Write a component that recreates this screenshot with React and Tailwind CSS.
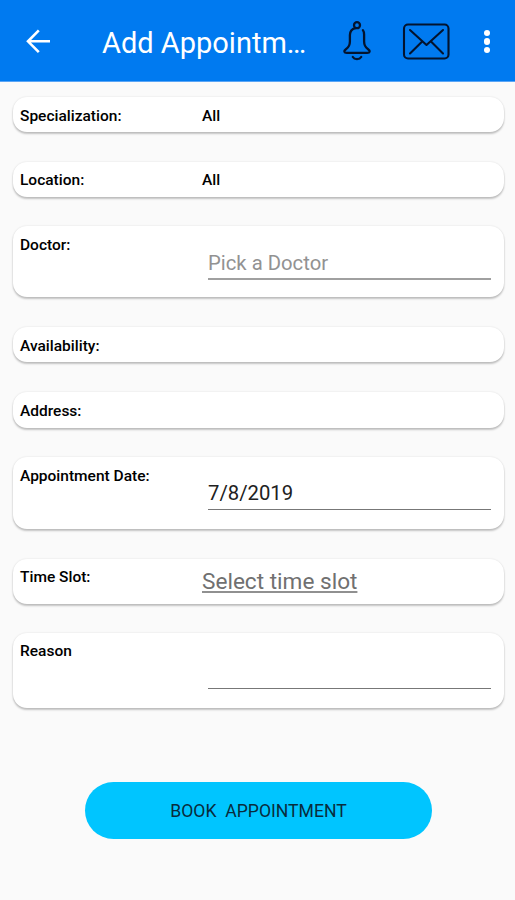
import React from 'react'

const fields = [
    { label: 'Specialization:', type: 'text', value: 'All', box: 'h-[35px]', pad: 'pt-[8.5px]' },
    { label: 'Location:', type: 'text', value: 'All', box: 'h-[35px] mt-[30px]', pad: 'pt-2' },
    { label: 'Doctor:', type: 'input', placeholder: 'Pick a Doctor', box: 'h-[71px] mt-[29px]', pad: 'pt-[9px]', line: 'h-[54px] pt-[23px] border-b-2 border-[#a0a0a0]' },
    { label: 'Availability:', type: 'text', value: '', box: 'h-[35px] mt-[30px]', pad: 'pt-[9px]' },
    { label: 'Address:', type: 'text', value: '', box: 'h-[36px] mt-[30px]', pad: 'pt-[9px]' },
    { label: 'Appointment Date:', type: 'input', value: '7/8/2019', box: 'h-[72px] mt-[29px]', pad: 'pt-[9px]', line: 'h-[53px] pt-[22px] border-b border-[#777777]' },
    { label: 'Time Slot:', type: 'link', value: 'Select time slot', box: 'h-[45px] mt-[30px]', pad: 'pt-2' },
    { label: 'Reason', type: 'input', value: '', box: 'h-[75px] mt-[29px]', pad: 'pt-2', line: 'h-[56px] pt-[22px] border-b border-[#777777]' },
]

function BellIcon() {
    return (
        <svg width="30" height="42" viewBox="0 0 30 42" fill="none" stroke="#03142f" strokeWidth="2.3" strokeLinecap="round" strokeLinejoin="round">
            <circle cx="15" cy="5.2" r="3" />
            <path d="M13.3 8.2C9.5 9.2 8 11.5 7.9 15v6.5c0 3.5-1.2 5.800-4 7.800C1.400 31.100 2 32.800 4.800 32.800h20.400c2.800 0 3.400-1.700.9-3.500-2.800-2-4-4.300-4-7.800v-7c0-2-.4-3.300-1.200-4.400" />
            <path d="M10.800 37c1.700 2.800 6.700 2.800 8.400 0" />
        </svg>
    )
}

function MailIcon() {
    return (
        <svg className="relative top-px" width="48" height="37" viewBox="0 0 48 37" fill="none" stroke="#03142f" strokeWidth="2.1" strokeLinecap="round" strokeLinejoin="round">
            <rect x="2" y="1.5" width="44.5" height="34" rx="4" />
            <path d="M8 7l16.500 15L41 7M8 30.500l12.200-12M29 18.500l12 12" />
        </svg>
    )
}

function Header() {
    return (
        <header className="flex h-[82px] items-center border-b border-[#5aa5f5] bg-[#007af0] text-white">
            <svg className="ml-[26px] shrink-0" width="25" height="24" viewBox="0 0 25 24" fill="none" stroke="currentColor" strokeWidth="2.6">
                <path d="M24 12.300H2M12.800 1.300L2 12.300l10.800 10.800" />
            </svg>
            <h1 className="ml-[51px] w-[240px] shrink-0 whitespace-nowrap pt-[4px] text-[29px] leading-9">Add Appointm…</h1>
            <div className="flex shrink-0 items-center">
                <BellIcon />
                <div className="ml-[30px]">
                    <MailIcon />
                </div>
                <div className="ml-[33.5px] flex flex-col gap-[2px] pt-[2px]">
                    <span className="size-[6.5px] rounded-full bg-white" />
                    <span className="size-[6.5px] rounded-full bg-white" />
                    <span className="size-[6.5px] rounded-full bg-white" />
                </div>
            </div>
        </header>
    )
}

function FieldValue({ field }) {
    if (field.type === 'input') {
        return (
            <div className={`ml-[6px] w-[283px] ${field.line}`}>
                <input
                    className="block h-7 w-full bg-transparent p-0 text-[20.3px] text-[#212121] outline-none placeholder:text-[#929292]"
                    placeholder={field.placeholder}
                    defaultValue={field.value}
                />
            </div>
        )
    }
    if (field.type === 'link') {
        return <a className="block pt-[9px] text-[22.6px] leading-7 text-[#707070] underline decoration-[#909090] decoration-2 underline-offset-2">{field.value}</a>
    }
    return <span className={`block text-[15.5px] leading-5 font-medium text-black ${field.pad}`}>{field.value}</span>
}

function FieldCard({ field }) {
    return (
        <div className={`flex items-start rounded-[14px] bg-white shadow-[0_2px_2px_rgba(0,0,0,0.22),0_0_2px_rgba(0,0,0,0.12)] ${field.box}`}>
            <span className={`w-[189px] shrink-0 pl-[7px] text-[15.5px] leading-5 font-medium text-black ${field.pad}`}>{field.label}</span>
            <FieldValue field={field} />
        </div>
    )
}

function App() {
    return (
        <div className="min-h-screen bg-[#fafafa] font-[Roboto,sans-serif]">
            <Header />
            <main className="flex flex-col pt-[15px] pr-[11px] pl-[13px]">
                {fields.map((field) => (
                    <FieldCard key={field.label} field={field} />
                ))}
                <button className="mt-[74px] ml-[72px] h-[57px] w-[347px] rounded-full bg-[#00c5ff] pt-[2px] text-[17.6px] text-[#092c3c]">
                    <span className="whitespace-pre">BOOK  APPOINTMENT</span>
                </button>
            </main>
        </div>
    )
}

export default App
